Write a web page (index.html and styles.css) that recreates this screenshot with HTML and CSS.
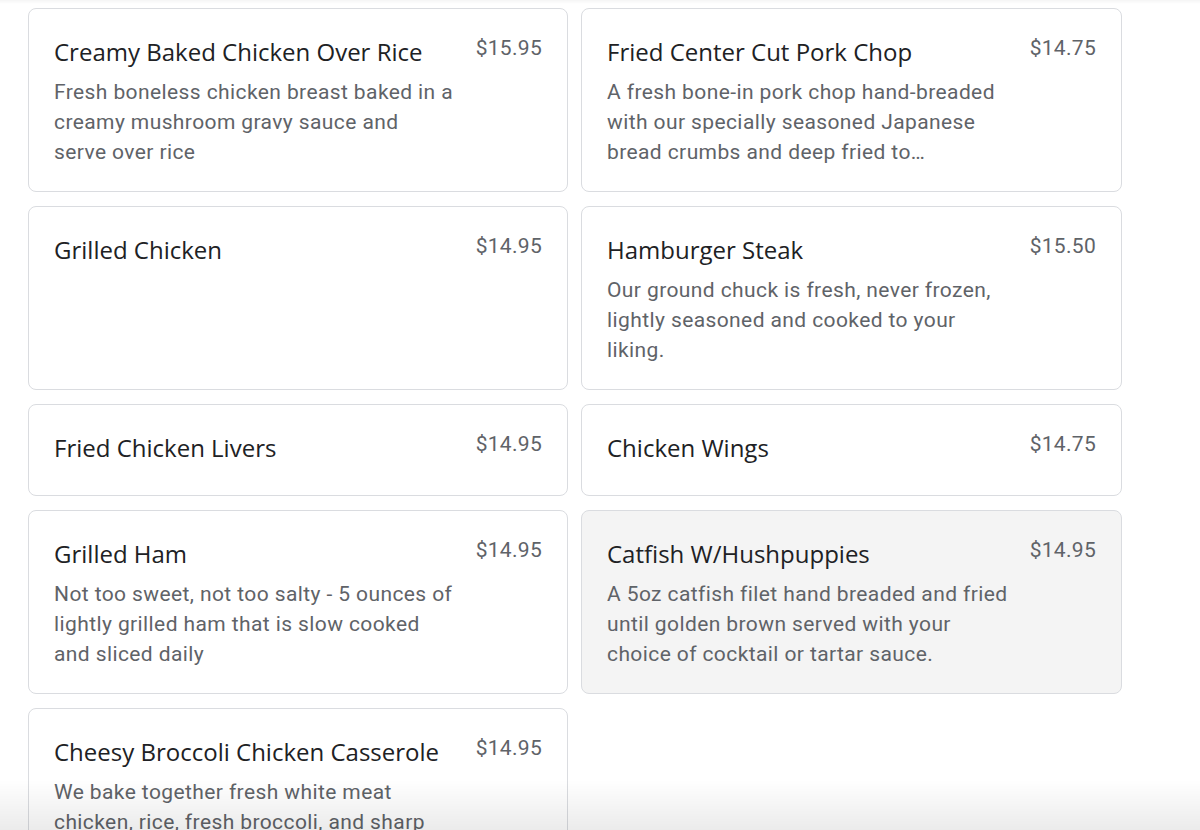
FILE: index.html
```html
<!DOCTYPE html>
<html lang="en">
<head>
  <meta charset="UTF-8" />
  <title>Menu</title>
  <link rel="stylesheet" href="styles.css">
</head>
<body>
  <div class="menu">
    <div class="item">
      <div class="info">
        <div class="name">Creamy Baked Chicken Over Rice</div>
        <div class="desc">Fresh boneless chicken breast baked in a creamy mushroom gravy sauce and serve over rice</div>
      </div>
      <div class="price">$15.95</div>
    </div>
    <div class="item">
      <div class="info">
        <div class="name">Fried Center Cut Pork Chop</div>
        <div class="desc">A fresh bone-in pork chop hand-breaded with our specially seasoned Japanese bread crumbs and deep fried to perfection, served with your choice of sides</div>
      </div>
      <div class="price">$14.75</div>
    </div>
    <div class="item">
      <div class="info">
        <div class="name">Grilled Chicken</div>
      </div>
      <div class="price">$14.95</div>
    </div>
    <div class="item">
      <div class="info">
        <div class="name">Hamburger Steak</div>
        <div class="desc">Our ground chuck is fresh, never frozen, lightly seasoned and cooked to your liking.</div>
      </div>
      <div class="price">$15.50</div>
    </div>
    <div class="item">
      <div class="info">
        <div class="name">Fried Chicken Livers</div>
      </div>
      <div class="price">$14.95</div>
    </div>
    <div class="item">
      <div class="info">
        <div class="name">Chicken Wings</div>
      </div>
      <div class="price">$14.75</div>
    </div>
    <div class="item">
      <div class="info">
        <div class="name">Grilled Ham</div>
        <div class="desc">Not too sweet, not too salty - 5 ounces of lightly grilled ham that is slow cooked and sliced daily</div>
      </div>
      <div class="price">$14.95</div>
    </div>
    <div class="item hover">
      <div class="info">
        <div class="name">Catfish W/Hushpuppies</div>
        <div class="desc">A 5oz catfish filet hand breaded and fried until golden brown served with your choice of cocktail or tartar sauce.</div>
      </div>
      <div class="price">$14.95</div>
    </div>
    <div class="item">
      <div class="info">
        <div class="name">Cheesy Broccoli Chicken Casserole</div>
        <div class="desc">We bake together fresh white meat chicken, rice, fresh broccoli, and sharp cheddar cheese</div>
      </div>
      <div class="price">$14.95</div>
    </div>
  </div>

  <div class="fade-top"></div>
  <div class="fade-bottom"></div>
</body>
</html>
```

FILE: styles.css
```css
body {
  margin: 0;
  background: #fff;
  font-family: Roboto, Arial, sans-serif;
  overflow: hidden;
}
.menu {
  display: grid;
  grid-template-columns: 540px 541px;
  column-gap: 13px;
  row-gap: 14px;
  padding: 8px 0 0 28px;
}
.item {
  display: flex;
  gap: 21px;
  padding: 20px 25px 24px 25px;
  border: 1px solid #dadce0;
  border-radius: 8px;
  background: #fff;
}
.item.hover {
  background: #f4f4f4;
}
.info {
  flex: 1;
  min-width: 0;
}
.name {
  font-family: "Open Sans", sans-serif;
  font-size: 24px;
  line-height: 46px;
  color: #202124;
}
.desc {
  margin-top: 2px;
  font-size: 21px;
  line-height: 30px;
  color: #5f6368;
  letter-spacing: 0.4px;
  display: -webkit-box;
  -webkit-line-clamp: 3;
  -webkit-box-orient: vertical;
  overflow: hidden;
}
.price {
  margin-top: 4px;
  font-size: 21px;
  line-height: 30px;
  letter-spacing: 0.3px;
  color: #5f6368;
  white-space: nowrap;
}
.fade-top {
  position: fixed;
  top: 0;
  left: 0;
  right: 0;
  height: 4px;
  background: linear-gradient(rgba(0, 0, 0, 0.04), rgba(0, 0, 0, 0));
}
.fade-bottom {
  position: fixed;
  bottom: 0;
  left: 0;
  right: 0;
  height: 50px;
  background: linear-gradient(rgba(0, 0, 0, 0), rgba(0, 0, 0, 0.08));
}
```
